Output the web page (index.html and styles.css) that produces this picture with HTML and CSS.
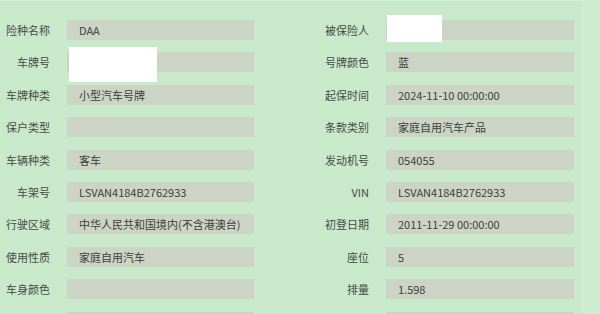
FILE: index.html
```html
<!DOCTYPE html>
<html lang="zh-CN">
<head>
<meta charset="utf-8">
<link rel="stylesheet" href="styles.css">
</head>
<body>
<div class="page">
  <div class="panel">
    <div class="grid">
      <div class="label">险种名称</div><div class="field">DAA</div>
      <div class="label">被保险人</div><div class="field"><span class="mask mask-insured"></span></div>

      <div class="label">车牌号</div><div class="field"><span class="mask mask-plate"></span></div>
      <div class="label">号牌颜色</div><div class="field">蓝</div>

      <div class="label">车牌种类</div><div class="field">小型汽车号牌</div>
      <div class="label">起保时间</div><div class="field">2024-11-10 00:00:00</div>

      <div class="label">保户类型</div><div class="field"></div>
      <div class="label">条款类别</div><div class="field">家庭自用汽车产品</div>

      <div class="label">车辆种类</div><div class="field">客车</div>
      <div class="label">发动机号</div><div class="field">054055</div>

      <div class="label">车架号</div><div class="field">LSVAN4184B2762933</div>
      <div class="label">VIN</div><div class="field">LSVAN4184B2762933</div>

      <div class="label">行驶区域</div><div class="field">中华人民共和国境内(不含港澳台)</div>
      <div class="label">初登日期</div><div class="field">2011-11-29 00:00:00</div>

      <div class="label">使用性质</div><div class="field">家庭自用汽车</div>
      <div class="label">座位</div><div class="field">5</div>

      <div class="label">车身颜色</div><div class="field"></div>
      <div class="label">排量</div><div class="field">1.598</div>

      <div class="label"></div><div class="field"></div>
      <div class="label"></div><div class="field"></div>
    </div>
  </div>
  <div class="side"></div>
</div>
</body>
</html>
```

FILE: styles.css
```css
html, body {
  margin: 0;
  padding: 0;
  width: 600px;
  height: 314px;
  overflow: hidden;
  background: #c9eacb;
  font-family: "Noto Sans CJK SC", "Noto Sans", sans-serif;
}

.page {
  display: flex;
  height: 314px;
  overflow: hidden;
}

.panel {
  width: 583px;
  height: 314px;
  overflow: hidden;
  flex: none;
  border-top: 1px solid #d6f0d6;
  border-right: 1px solid #d4efd5;
  background: #c8e9ca;
  box-sizing: border-box;
  padding-top: 19px;
}

.side {
  flex: 1;
  background: #cdecd0;
}

.grid {
  display: grid;
  grid-template-columns: 67px 187px 132px 188px;
  grid-auto-rows: 20px;
  row-gap: 12.4px;
}

.label {
  font-size: 11px;
  line-height: 20px;
  color: #474a47;
  text-align: right;
  padding-right: 17px;
  white-space: nowrap;
}

.field {
  position: relative;
  background: #cbd4c5;
  border-radius: 1px;
  font-size: 11px;
  line-height: 20px;
  color: #3d403d;
  padding-left: 12px;
  white-space: nowrap;
}

.mask {
  position: absolute;
  background: #ffffff;
}

.mask-plate {
  left: 2px;
  top: -5px;
  width: 88px;
  height: 35px;
}

.mask-insured {
  left: 1px;
  top: -5px;
  width: 55px;
  height: 27px;
}
```
